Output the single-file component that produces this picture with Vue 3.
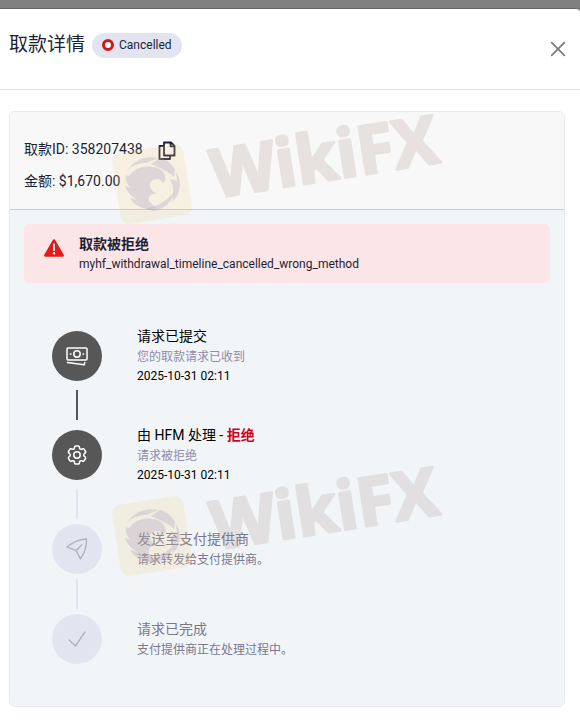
<template>
  <div class="backdrop">
    <section class="modal" role="dialog" aria-labelledby="modal-title">
      <header class="modal-header">
        <h1 id="modal-title" class="modal-title">取款详情</h1>
        <span class="badge"><i class="badge-dot"></i>Cancelled</span>
        <button type="button" class="icon-btn close-btn" aria-label="关闭">
          <svg width="16" height="16" viewBox="0 0 16 16" fill="none" stroke="#7b7b7b" stroke-width="1.7">
            <path d="M1.2 1.2 14.8 14.8M14.8 1.2 1.2 14.8" />
          </svg>
        </button>
      </header>

      <div class="modal-body">
        <article class="card">
          <div class="summary">
            <div class="summary-row">
              <span>取款ID: {{ withdrawal.id }}</span>
              <button type="button" class="icon-btn copy-btn" aria-label="复制" @click="copyId">
                <svg width="18" height="20" viewBox="0 0 18 20" fill="none" stroke="#1b1f35" stroke-width="1.8" stroke-linejoin="round">
                  <path d="M6 1.5h7L16.5 5v9.5H6z" />
                  <path d="M12.5 1.8v3.5h3.7M5.5 5H1.5v13H12v-3" />
                </svg>
              </button>
            </div>
            <div class="summary-row">金额: {{ withdrawal.amount }}</div>
          </div>

          <div class="details">
            <div class="alert" role="alert">
              <svg class="alert-icon" width="20" height="18" viewBox="0 0 20 18">
                <path d="M8.9.8a1.3 1.3 0 0 1 2.2 0l8.6 14.9a1.3 1.3 0 0 1-1.1 2H1.4a1.3 1.3 0 0 1-1.1-2z" fill="#e11b17" />
                <path d="M10 5.4v5.8" stroke="#fff" stroke-width="1.8" stroke-linecap="round" />
                <circle cx="10" cy="14.2" r="1.2" fill="#fff" />
              </svg>
              <div>
                <strong class="alert-title">取款被拒绝</strong>
                <p class="alert-text">myhf_withdrawal_timeline_cancelled_wrong_method</p>
              </div>
            </div>

            <ol class="timeline">
              <li v-for="step in steps" :key="step.icon" class="step" :class="{ done: step.done }">
                <div class="step-row">
                  <span class="marker">
                    <svg v-if="step.icon === 'cash'" width="22" height="20" viewBox="0 0 22 20" fill="none" stroke="currentColor" stroke-width="1.5" stroke-linejoin="round" stroke-linecap="round">
                      <rect x="1" y="2" width="20" height="12" rx="1" />
                      <circle cx="11" cy="8" r="3.2" />
                      <path d="M4.4 8h.6M17 8h.6M1.4 16.5l16.8 2.3.6-2.2" />
                    </svg>
                    <svg v-else-if="step.icon === 'gear'" width="24" height="24" viewBox="0 0 24 24" fill="none" stroke="currentColor" stroke-width="1.5" stroke-linecap="round" stroke-linejoin="round">
                      <path d="M9.6 3.9c.1-.5.6-.9 1.1-.9h2.6c.5 0 1 .4 1.1.9l.2 1.3c.1.4.3.7.6.9l.3.1c.3.2.7.2 1.1.1l1.2-.5c.5-.2 1.1 0 1.4.5l1.3 2.2c.3.5.2 1.1-.3 1.4l-1 .9c-.3.2-.4.6-.4 1v.4c0 .4.1.7.4 1l1 .8c.4.4.5 1 .3 1.5l-1.3 2.2c-.3.5-.9.7-1.4.5l-1.2-.5c-.4-.1-.8-.1-1.1.1l-.3.1c-.3.2-.5.5-.6.9l-.2 1.3c-.1.5-.6.9-1.1.9h-2.6c-.5 0-1-.4-1.1-.9l-.2-1.3c-.1-.4-.3-.7-.6-.9l-.3-.1c-.3-.2-.7-.2-1.1-.1l-1.2.5c-.5.2-1.1 0-1.4-.5l-1.3-2.2c-.3-.5-.2-1.1.3-1.5l1-.8c.3-.3.4-.6.4-1v-.4c0-.4-.1-.8-.4-1l-1-.9c-.4-.3-.6-.9-.3-1.4l1.3-2.2c.3-.5.9-.7 1.4-.5l1.2.5c.4.1.8.1 1.1-.1l.3-.1c.3-.2.5-.5.6-.9z" />
                      <circle cx="12" cy="12" r="3.2" />
                    </svg>
                    <svg v-else-if="step.icon === 'send'" width="22" height="22" viewBox="0 0 22 22" fill="none" stroke="currentColor" stroke-width="1.4" stroke-linecap="round" stroke-linejoin="round">
                      <path d="M1 9C6 4.5 13 1.5 20.5 1c.2 7-1.6 14-6.2 20l-4.1-8.4zM10.2 12.6 15.7 7" />
                    </svg>
                    <svg v-else width="18" height="18" viewBox="0 0 18 18" fill="none" stroke="currentColor" stroke-width="1.4" stroke-linecap="round" stroke-linejoin="round">
                      <path d="M1.2 10 7.5 16 16.8 2" />
                    </svg>
                  </span>
                  <div class="step-text">
                    <h2 class="step-title">{{ step.title }}<b v-if="step.status">{{ step.status }}</b></h2>
                    <p class="step-note">{{ step.note }}</p>
                    <time v-if="step.time" class="step-time">{{ step.time }}</time>
                  </div>
                </div>
              </li>
            </ol>
          </div>
        </article>
      </div>

      <!-- 水印 -->
      <div class="watermarks" aria-hidden="true">
        <svg v-for="n in 2" :key="n" class="watermark" width="340" height="120" viewBox="0 0 340 120">
          <rect x="6" y="40" width="72" height="72" rx="9" transform="rotate(-9 42 76)" fill="#f5cf80" fill-opacity=".2" />
          <g transform="translate(42 76)" fill="#a49cc0" fill-opacity=".3">
            <path d="M-24-14C-18-24-6-29 6-26L-6-21C-13-21-19-19-24-14z" />
            <path d="M8-26C15-24 20-20 23-14L22-7C17-12 10-15-1-20z" />
            <path d="M24-12C29-5 29 4 25 12L20 18C22 10 22 3 18-5L25-3z" />
            <path d="M23 7C20 18 12 25 2 27L-8 25C4 23 14 18 23 7z" />
            <path d="M-26-4C-20-14-10-19 0-17 8-17 13-12 14-4L11-1 7-5C1-5-2-3-2 1-2 5 1 8 5 10-1 9-4 12-3 17L4 24C-6 27-17 23-22 14L-15 16C-21 12-25 8-27 2L-21 4C-25 0-27-4-26-9L-20-6z" />
          </g>
          <text class="watermark-text" transform="translate(105 90) rotate(-9)">WikiFX</text>
        </svg>
      </div>
    </section>
  </div>
</template>

<script setup>
import { ref } from 'vue';

const withdrawal = ref({
  id: '358207438',
  amount: '$1,670.00'
});

// 时间线步骤
const steps = ref([
  { icon: 'cash', title: '请求已提交', note: '您的取款请求已收到', time: '2025-10-31 02:11', done: true },
  { icon: 'gear', title: '由 HFM 处理 - ', status: '拒绝', note: '请求被拒绝', time: '2025-10-31 02:11', done: true },
  { icon: 'send', title: '发送至支付提供商', note: '请求转发给支付提供商。', done: false },
  { icon: 'check', title: '请求已完成', note: '支付提供商正在处理过程中。', done: false }
]);

// 复制取款ID
const copyId = () => {
  navigator.clipboard?.writeText(withdrawal.value.id);
};
</script>

<style>
body {
  background: #fff;
}
</style>

<style scoped>
* {
  box-sizing: border-box;
}

h1,
h2,
p,
ol {
  margin: 0;
  padding: 0;
  font-weight: 400;
}

.backdrop {
  padding-top: 8px;
  background: #808080;
  color: #1b1f35;
  font-family: Roboto, "Noto Sans CJK SC", sans-serif;
  font-size: 14px;
  line-height: 20px;
}

.modal {
  position: relative;
  min-height: calc(100vh - 8px);
  background: #fff;
  border-top: 1px solid #666;
  border-top-right-radius: 4px;
}

.modal-header {
  display: flex;
  align-items: center;
  gap: 7px;
  height: 81px;
  padding: 0 14px 8px 9px;
  border-bottom: 1px solid #dee0e3;
}

.modal-title {
  font-size: 19px;
  line-height: 28px;
}

.badge {
  display: flex;
  align-items: center;
  gap: 5px;
  height: 25px;
  padding: 0 10px;
  border-radius: 13px;
  background: #e2e5ef;
  font-size: 12px;
}

.badge-dot {
  width: 12px;
  height: 12px;
  border: 3px solid #cf1a14;
  border-radius: 50%;
  background: #fff;
}

.icon-btn {
  display: flex;
  padding: 0;
  border: 0;
  background: none;
  cursor: pointer;
}

.close-btn {
  margin: 8px 0 0 auto;
}

.copy-btn {
  padding-top: 4px;
}

.modal-body {
  padding: 21px 15px 19px 9px;
}

.card {
  overflow: hidden;
  border: 1px solid #e8eaee;
  border-radius: 6px;
  background: #f1f5f8;
}

.summary {
  display: flex;
  flex-direction: column;
  gap: 10px;
  padding: 25px 14px 18px;
  border-bottom: 1px solid #c8ccce;
  background: #f8f8f8;
}

.summary-row {
  display: flex;
  align-items: center;
  gap: 15px;
}

.details {
  padding: 14px 14px 42px;
}

.alert {
  display: flex;
  gap: 15px;
  padding: 10px 20px 9px;
  border-radius: 6px;
  background: #fce5e7;
}

.alert-icon {
  margin-top: 5px;
}

.alert-title {
  display: block;
  font-weight: 700;
}

.alert-text {
  font-size: 12px;
}

.timeline {
  margin-top: 43px;
  padding-left: 28px;
  list-style: none;
}

.step-row {
  display: flex;
  align-items: center;
  gap: 35px;
}

.marker {
  display: flex;
  flex: none;
  align-items: center;
  justify-content: center;
  width: 50px;
  height: 50px;
  border-radius: 50%;
  background: #e2e5ef;
  color: #b3b3c4;
}

/* 步骤之间的连接线 */
.step:not(:last-child)::after {
  content: "";
  display: block;
  width: 2px;
  height: 30px;
  margin: 5px 24px;
  background: #e2e5ef;
}

.step.done::after {
  margin-top: 4px;
}

.step:first-child::after {
  background: #575757;
}

.step-title {
  color: #77788f;
  font-size: 14px;
}

.step-title b {
  color: #d0021b;
  font-weight: 700;
}

.step-note {
  padding-top: 1px;
  color: #77788f;
  font-size: 12px;
}

.step-time {
  display: block;
  color: #000;
  font-size: 12px;
  line-height: 19px;
}

.done .marker {
  background: #575757;
  color: #fff;
}

.done .step-title {
  color: #000;
}

.done .step-note {
  color: #8f8ca8;
}

.watermarks {
  position: absolute;
  top: 99px;
  left: 110px;
  display: flex;
  flex-direction: column;
  gap: 232px;
  pointer-events: none;
}

.watermark {
  display: block;
  overflow: visible;
}

.watermark-text {
  fill: #9c8078;
  stroke: #9c8078;
  stroke-width: 3px;
  stroke-linejoin: round;
  font-family: "Open Sans", sans-serif;
  font-size: 67px;
  font-weight: 700;
  opacity: 0.18;
}
</style>
